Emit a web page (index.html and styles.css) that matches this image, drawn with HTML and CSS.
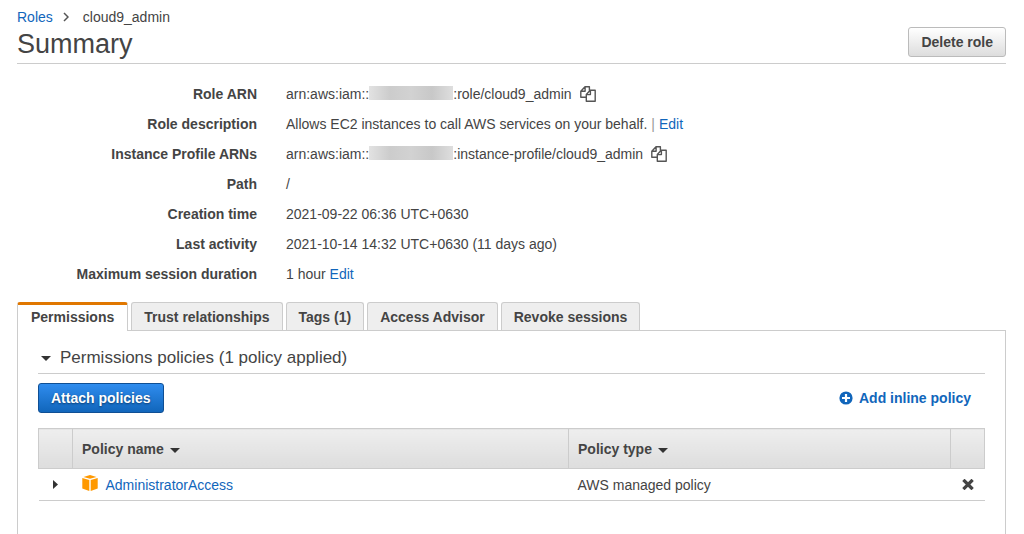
FILE: index.html
```html
<!DOCTYPE html>
<html lang="en">
<head>
<meta charset="utf-8">
<meta name="viewport" content="width=device-width, initial-scale=1">
<title>cloud9_admin - Summary</title>
<link rel="stylesheet" href="styles.css">
</head>
<body>
<svg width="0" height="0" class="sprite" aria-hidden="true">
  <symbol id="copy" viewBox="0 0 16 16">
    <path d="M5.800 11.300H.8V5.200L5 .8h4.400v3.600M5.100 1v4.300H1M6.300 8.400l3.900-4.200h5v11H6.300zM10.400 4.400v4.200H6.500" fill="none" stroke="#555" stroke-width="1.4" stroke-linejoin="round"/>
  </symbol>
</svg>
<header class="page-header">
  <div class="titles">
    <nav class="crumbs" aria-label="Breadcrumb">
      <a href="#">Roles</a>
      <svg class="chevron" viewBox="0 0 6 10" aria-hidden="true"><path d="M1 1l4 4-4 4" fill="none" stroke="#555" stroke-width="1.5"/></svg>
      <span>cloud9_admin</span>
    </nav>
    <h1>Summary</h1>
  </div>
  <button type="button" class="btn">Delete role</button>
</header>

<dl class="details">
  <dt>Role ARN</dt>
  <dd><span>arn:aws:iam::</span><span class="mask"></span><span>:role/cloud9_admin</span><button type="button" class="copy" aria-label="Copy role ARN"><svg viewBox="0 0 16 16"><use href="#copy"/></svg></button></dd>
  <dt>Role description</dt>
  <dd>Allows EC2 instances to call AWS services on your behalf.<span class="bar">|</span><a href="#">Edit</a></dd>
  <dt>Instance Profile ARNs</dt>
  <dd><span>arn:aws:iam::</span><span class="mask"></span><span>:instance-profile/cloud9_admin</span><button type="button" class="copy" aria-label="Copy instance profile ARN"><svg viewBox="0 0 16 16"><use href="#copy"/></svg></button></dd>
  <dt>Path</dt>
  <dd>/</dd>
  <dt>Creation time</dt>
  <dd>2021-09-22 06:36 UTC+0630</dd>
  <dt>Last activity</dt>
  <dd>2021-10-14 14:32 UTC+0630 (11 days ago)</dd>
  <dt>Maximum session duration</dt>
  <dd>1 hour&nbsp;<a href="#">Edit</a></dd>
</dl>

<div class="tabs" role="tablist">
  <button type="button" role="tab" class="tab active" aria-selected="true">Permissions</button>
  <button type="button" role="tab" class="tab">Trust relationships</button>
  <button type="button" role="tab" class="tab">Tags (1)</button>
  <button type="button" role="tab" class="tab">Access Advisor</button>
  <button type="button" role="tab" class="tab">Revoke sessions</button>
</div>

<main class="panel">
  <h2><svg class="caret" viewBox="0 0 10 5" aria-hidden="true"><path d="M0 0h10L5 5z"/></svg>Permissions policies (1 policy applied)</h2>
  <div class="actions">
    <button type="button" class="btn primary">Attach policies</button>
    <a href="#" class="add"><svg class="plus" viewBox="0 0 14 14" aria-hidden="true"><circle cx="7" cy="7" r="6.6" fill="#1166bb"/><path d="M7 3v8M3 7h8" stroke="#fff" stroke-width="2.2"/></svg>Add inline policy</a>
  </div>
  <table>
    <colgroup><col class="c-toggle"><col class="c-name"><col class="c-type"><col class="c-remove"></colgroup>
    <thead>
      <tr>
        <th></th>
        <th scope="col">Policy name<svg class="caret sort" viewBox="0 0 10 5" aria-hidden="true"><path d="M0 0h10L5 5z"/></svg></th>
        <th scope="col">Policy type<svg class="caret sort" viewBox="0 0 10 5" aria-hidden="true"><path d="M0 0h10L5 5z"/></svg></th>
        <th></th>
      </tr>
    </thead>
    <tbody>
      <tr>
        <td class="center"><button type="button" class="icon-btn" aria-label="Expand AdministratorAccess"><svg class="expand" viewBox="0 0 5 9"><path d="M0 0l5 4.5L0 9z" fill="#333"/></svg></button></td>
        <td>
          <div class="policy">
            <svg class="cube" viewBox="0 0 16 16" aria-hidden="true"><path d="M8 0l6.500 1.900L8 3.800 1.500 1.900zM.3 3l7 2v11L.3 13.600zM15.700 3l-7 2v11l7-2.400z" fill="#ff9900"/></svg>
            <a href="#">AdministratorAccess</a>
          </div>
        </td>
        <td>AWS managed policy</td>
        <td class="center"><button type="button" class="icon-btn" aria-label="Detach AdministratorAccess"><svg class="cross" viewBox="0 0 12 11"><path d="M2.500 2l7 7M9.500 2l-7 7" stroke="#444" stroke-width="3.200" stroke-linecap="square"/></svg></button></td>
      </tr>
    </tbody>
  </table>
</main>
</body>
</html>
```
FILE: styles.css
```css
* { box-sizing: border-box; }

body {
  display: flex;
  flex-direction: column;
  min-height: 100vh;
  margin: 0;
  padding: 7px 18px 0 17px;
  background: #fff;
  color: #444;
  font: 14px/20px "Liberation Sans", Arial, sans-serif;
}

button { font: inherit; color: inherit; cursor: pointer; }
a { color: #1166bb; text-decoration: none; }
a:hover { text-decoration: underline; }
svg { display: block; flex: none; }
.sprite { position: absolute; }

.page-header {
  display: flex;
  justify-content: space-between;
  align-items: flex-end;
  border-bottom: 1px solid #ccc;
}
.page-header .btn { margin-bottom: 6px; }

.crumbs { display: flex; align-items: center; height: 20px; }
.chevron { width: 6px; height: 10px; margin: 0 14px 0 10px; }

h1 {
  margin: 0;
  padding: 1px 0 3px;
  font-size: 27px;
  line-height: 32px;
  font-weight: normal;
}

.btn {
  height: 30px;
  padding: 0 12px;
  border: 1px solid #bbb;
  border-radius: 3px;
  background: linear-gradient(#fff, #ddd);
  font-weight: bold;
}
.btn.primary {
  border-color: #0f4f94;
  background: linear-gradient(#2f8cee, #1166bb);
  color: #fff;
  text-shadow: 0 1px 2px #0a3c70;
}

.details {
  display: grid;
  grid-template-columns: 240px 1fr;
  column-gap: 29px;
  margin: 15px 0 13px;
}
.details dt { font-weight: bold; text-align: right; line-height: 30px; }
.details dd { display: flex; align-items: center; margin: 0; height: 30px; }

.mask {
  width: 84px;
  height: 14px;
  margin-bottom: 2px;
  background: linear-gradient(90deg, #e2e2e2, #ccc 25%, #d2d2d2 50%, #c8c8c8 75%, #dedede);
}
.bar { margin: 0 4px; color: #999; }

.copy { margin-left: 8px; padding: 0; border: 0; background: none; }
.copy svg { width: 16px; height: 16px; }

.tabs { display: flex; gap: 3px; }
.tab {
  height: 28px;
  padding: 0 12px;
  border: 1px solid #ccc;
  border-bottom: 0;
  border-radius: 3px 3px 0 0;
  background: #eee;
  font-weight: bold;
}
.tab.active {
  height: 29px;
  margin-bottom: -1px;
  padding: 0 13px 2px;
  border-top: 3px solid #e07700;
  background: #fff;
  z-index: 1;
}

.panel {
  flex: 1;
  padding: 16px 20px 32px;
  border: 1px solid #ccc;
  border-bottom: 0;
}

h2 {
  display: flex;
  align-items: center;
  gap: 9px;
  margin: 0 0 9px;
  padding: 0 0 4px 3px;
  border-bottom: 1px solid #ccc;
  font-size: 17px;
  line-height: 22px;
  font-weight: normal;
}
.caret { width: 10px; height: 5px; fill: #333; }
.sort { display: inline-block; margin-left: 6px; vertical-align: 1px; }

.actions {
  display: flex;
  align-items: center;
  justify-content: space-between;
  padding-right: 14px;
  margin-bottom: 15px;
}
.add { display: flex; align-items: center; gap: 6px; font-weight: bold; }
.plus { width: 14px; height: 14px; }

table { width: 100%; border-collapse: collapse; table-layout: fixed; }
.c-toggle, .c-remove { width: 34px; }
.c-name { width: 496px; }
th {
  height: 40px;
  padding: 0 9px;
  border: 1px solid #ccc;
  background: linear-gradient(#eee, #ddd);
  text-align: left;
}
td { height: 32px; padding: 0 9px; border-bottom: 1px solid #ccc; }
td.center { padding: 0; }

.policy { display: flex; align-items: center; gap: 8px; }
.cube { width: 16px; height: 16px; margin-bottom: 4px; }
.icon-btn { display: block; margin: auto; padding: 4px; border: 0; background: none; }
.expand { width: 5px; height: 9px; }
.cross { width: 12px; height: 11px; }
```
